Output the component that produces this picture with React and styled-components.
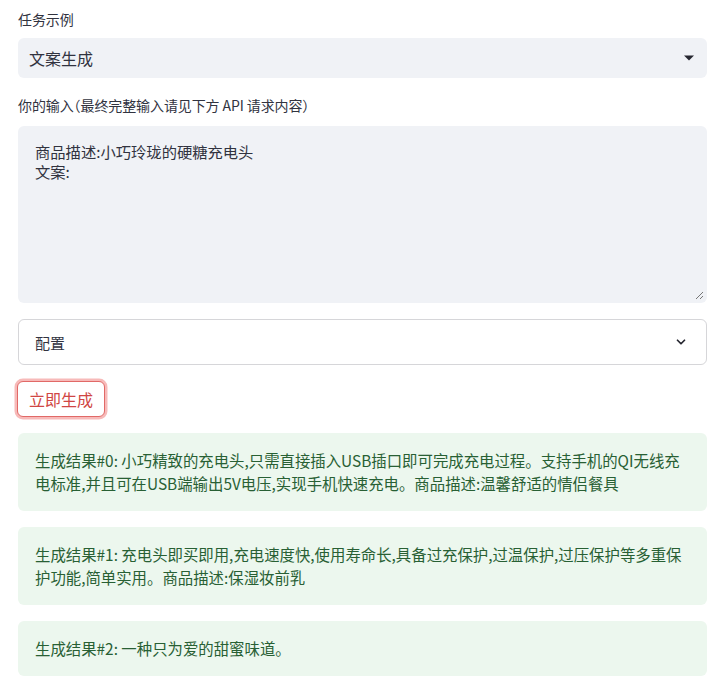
import React from "react";
import styled, { createGlobalStyle } from "styled-components";

const Global = createGlobalStyle`
  html, body { margin: 0; padding: 0; background: #fff; }
  body {
    font-family: "Noto Sans CJK SC", "Noto Sans", sans-serif;
    color: rgb(49, 51, 63);
    -webkit-font-smoothing: antialiased;
  }
`;

const Page = styled.div`
  width: 689px;
  margin-left: 18px;
  padding-top: 8px;
  display: flex;
  flex-direction: column;
`;

const Field = styled.div`
  display: flex;
  flex-direction: column;
  margin-bottom: ${(p) => p.$mb ?? 16}px;
`;

const Label = styled.label`
  font-size: 14px;
  line-height: 22px;
  height: 22px;
  margin-bottom: ${(p) => p.$gap ?? 8}px;
  color: rgb(49, 51, 63);
  font-feature-settings: "halt";
  letter-spacing: -0.1px;
`;

const Select = styled.div`
  height: 40px;
  box-sizing: border-box;
  background: rgb(240, 242, 246);
  border-radius: 6px;
  display: flex;
  align-items: center;
  justify-content: space-between;
  padding: 0 12px 0 11px;
  font-size: 16px;
`;

const TextArea = styled.div`
  position: relative;
  height: 177px;
  box-sizing: border-box;
  background: rgb(240, 242, 246);
  border-radius: 6px;
  padding: 15px 17px;
  font-size: 15.3px;
  line-height: 20px;
  white-space: pre-wrap;
`;

const Grip = styled.svg`
  position: absolute;
  right: 3px;
  bottom: 3px;
`;

const Expander = styled.div`
  height: 46px;
  box-sizing: border-box;
  border: 1px solid rgba(49, 51, 63, 0.2);
  border-radius: 6px;
  display: flex;
  align-items: center;
  justify-content: space-between;
  padding: 0 18px 0 16px;
  font-size: 15px;
  margin-bottom: 16px;
`;

const ButtonRow = styled.div`
  display: flex;
  margin-bottom: 16px;
`;

const Button = styled.button`
  height: 36px;
  padding: 0 11px;
  margin-left: -1px;
  background: #fff;
  border: 1px solid rgb(225, 105, 103);
  border-radius: 6px;
  box-shadow: 0 0 0 2.5px rgba(240, 130, 128, 0.55);
  color: rgb(208, 70, 68);
  font-family: "Noto Sans CJK SC", sans-serif;
  font-size: 16px;
  cursor: pointer;
`;

const Result = styled.div`
  background: rgb(236, 247, 238);
  border-radius: 6px;
  padding: 16px 16px 16px 17px;
  font-size: 15.4px;
  line-height: 23px;
  color: rgb(40, 96, 52);
  margin-bottom: 16px;
`;

const results = [
  "生成结果#0: 小巧精致的充电头,只需直接插入USB插口即可完成充电过程。支持手机的QI无线充电标准,并且可在USB端输出5V电压,实现手机快速充电。商品描述:温馨舒适的情侣餐具",
  "生成结果#1: 充电头即买即用,充电速度快,使用寿命长,具备过充保护,过温保护,过压保护等多重保护功能,简单实用。商品描述:保湿妆前乳",
  "生成结果#2: 一种只为爱的甜蜜味道。",
];

export default function App() {
  return (
    <>
      <Global />
      <Page>
        <Field>
          <Label $gap={8}>任务示例</Label>
          <Select>
            <span>文案生成</span>
            <svg width="12" height="8" viewBox="0 0 12 8">
              <path d="M1 1.5h10L6 6.5z" fill="rgb(38,39,48)" />
            </svg>
          </Select>
        </Field>
        <Field>
          <Label $gap={10}>你的输入（最终完整输入请见下方 API 请求内容）</Label>
          <TextArea>
            {"商品描述:小巧玲珑的硬糖充电头\n文案:"}
            <Grip width="10" height="10" viewBox="0 0 10 10">
              <path d="M9 2L2 9M9 6L6 9" stroke="#777" strokeWidth="1" />
            </Grip>
          </TextArea>
        </Field>
        <Expander>
          <span>配置</span>
          <svg width="14" height="14" viewBox="0 0 24 24" fill="none">
            <path d="M6 9l6 6 6-6" stroke="rgb(38,39,48)" strokeWidth="3" strokeLinecap="round" strokeLinejoin="round" />
          </svg>
        </Expander>
        <ButtonRow>
          <Button>立即生成</Button>
        </ButtonRow>
        {results.map((r) => (
          <Result key={r}>{r}</Result>
        ))}
      </Page>
    </>
  );
}
